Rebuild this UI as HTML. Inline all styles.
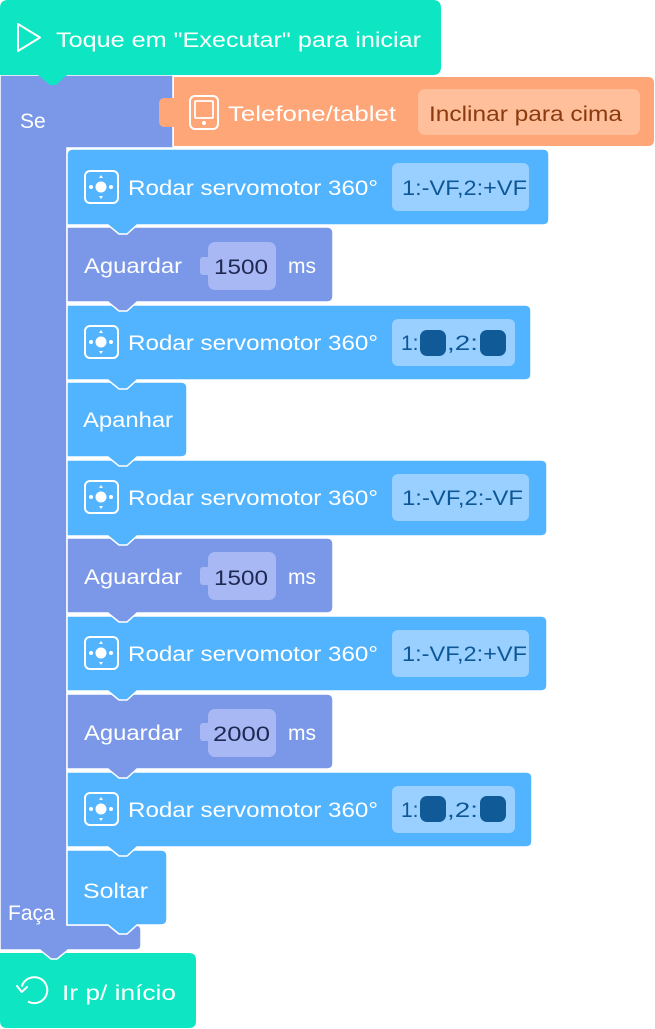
<!DOCTYPE html>
<html><head><meta charset="utf-8"><style>
html,body{margin:0;padding:0;background:#fff;width:655px;height:1029px;overflow:hidden}
svg{display:block}
text{font-family:"Liberation Sans",sans-serif;font-size:21px;fill:#fff}
.f{fill:#0E5796}
.n{fill:#1E2852}
</style></head><body>
<svg width="655" height="1029" viewBox="0 0 655 1029" xmlns="http://www.w3.org/2000/svg">
<defs>
<g id="servo">
<rect x="-16" y="-16" width="33" height="32" rx="5" fill="none" stroke="#fff" stroke-width="2"/>
<circle cx="0" cy="0" r="5.5" fill="#fff"/>
<circle cx="-10" cy="0" r="2" fill="#fff"/><circle cx="10" cy="0" r="2" fill="#fff"/>
<path d="M-2 -9 L0 -12 L2 -9Z M-2 9 L0 12 L2 9Z" fill="#fff"/>
</g>
</defs>
<!-- bottom green -->
<path d="M0 953 H189 Q196 953 196 960 V1021 Q196 1028 189 1028 H7 Q0 1028 0 1021 Z" fill="#0EE6C3"/>
<path d="M21.8 986.5 A13 13 0 1 1 28 1001.5" fill="none" stroke="#fff" stroke-width="2"/>
<path d="M17 986 L21.8 992 L27 987" fill="none" stroke="#fff" stroke-width="2" stroke-linejoin="round" stroke-linecap="round"/>
<text x="62" y="1000" textLength="114" lengthAdjust="spacingAndGlyphs">Ir p/ início</text>
<!-- purple C -->
<path d="M0 75 H173 V148 H67 V925 H136 Q141 925 141 930 V945 Q141 950 136 950 H68 L57 959 H51 L40 950 H0 Z" fill="#7B98E8" stroke="#fff" stroke-width="1.5"/>
<text x="20" y="128">Se</text>
<text x="8" y="920">Faça</text>
<!-- soltar -->
<path d="M67 850 H161 Q167 850 167 856 V919 Q167 925 161 925 H137 L127 934 H119 L108 925 H67 Z" fill="#52B4FF" stroke="#fff" stroke-width="1.5"/>
<text x="83" y="898" textLength="65" lengthAdjust="spacingAndGlyphs">Soltar</text>
<!-- servo5 -->
<path d="M67 772 H526 Q532 772 532 778 V841 Q532 847 526 847 H137 L127 856 H119 L108 847 H67 Z" fill="#52B4FF" stroke="#fff" stroke-width="1.5"/>
<use href="#servo" x="101" y="809"/>
<text x="128" y="817" textLength="250" lengthAdjust="spacingAndGlyphs">Rodar servomotor 360°</text>
<rect x="392" y="786" width="123" height="47" rx="6" fill="#9AD0FF"/>
<text x="401" y="817" class="f">1:</text><rect x="420" y="796" width="26" height="26" rx="7" fill="#0F5A97"/>
<text x="447" y="817" class="f" textLength="31" lengthAdjust="spacingAndGlyphs">,2:</text><rect x="480" y="796" width="26" height="26" rx="7" fill="#0F5A97"/>
<!-- ag3 -->
<path d="M67 694 H327 Q333 694 333 700 V763 Q333 769 327 769 H137 L127 778 H119 L108 769 H67 Z" fill="#7B98E8" stroke="#fff" stroke-width="1.5"/>
<text x="84" y="740" textLength="98" lengthAdjust="spacingAndGlyphs">Aguardar</text>
<rect x="200" y="723" width="14" height="18" rx="3" fill="#A8B8F4"/>
<rect x="208" y="709" width="68" height="48" rx="7" fill="#A8B8F4"/>
<text x="213" y="741" class="n" textLength="57" lengthAdjust="spacingAndGlyphs">2000</text>
<text x="288" y="740">ms</text>
<!-- servo4 -->
<path d="M67 616 H541 Q547 616 547 622 V685 Q547 691 541 691 H137 L127 700 H119 L108 691 H67 Z" fill="#52B4FF" stroke="#fff" stroke-width="1.5"/>
<use href="#servo" x="101" y="653"/>
<text x="128" y="661" textLength="250" lengthAdjust="spacingAndGlyphs">Rodar servomotor 360°</text>
<rect x="392" y="630" width="137" height="47" rx="6" fill="#9AD0FF"/>
<text x="402" y="661" class="f" textLength="125" lengthAdjust="spacingAndGlyphs">1:-VF,2:+VF</text>
<!-- ag2 -->
<path d="M67 538 H327 Q333 538 333 544 V607 Q333 613 327 613 H137 L127 622 H119 L108 613 H67 Z" fill="#7B98E8" stroke="#fff" stroke-width="1.5"/>
<text x="84" y="584" textLength="98" lengthAdjust="spacingAndGlyphs">Aguardar</text>
<rect x="200" y="567" width="14" height="18" rx="3" fill="#A8B8F4"/>
<rect x="208" y="552" width="68" height="48" rx="7" fill="#A8B8F4"/>
<text x="214" y="585" class="n" textLength="54" lengthAdjust="spacingAndGlyphs">1500</text>
<text x="288" y="584">ms</text>
<!-- servo3 -->
<path d="M67 460 H541 Q547 460 547 466 V530 Q547 536 541 536 H137 L127 545 H119 L108 536 H67 Z" fill="#52B4FF" stroke="#fff" stroke-width="1.5"/>
<use href="#servo" x="101" y="497"/>
<text x="128" y="505" textLength="250" lengthAdjust="spacingAndGlyphs">Rodar servomotor 360°</text>
<rect x="392" y="474" width="137" height="47" rx="6" fill="#9AD0FF"/>
<text x="402" y="505" class="f" textLength="121" lengthAdjust="spacingAndGlyphs">1:-VF,2:-VF</text>
<!-- apanhar -->
<path d="M67 382 H181 Q187 382 187 388 V451 Q187 457 181 457 H137 L127 466 H119 L108 457 H67 Z" fill="#52B4FF" stroke="#fff" stroke-width="1.5"/>
<text x="83" y="427" textLength="90" lengthAdjust="spacingAndGlyphs">Apanhar</text>
<!-- servo2 -->
<path d="M67 305 H525 Q531 305 531 311 V374 Q531 380 525 380 H137 L127 389 H119 L108 380 H67 Z" fill="#52B4FF" stroke="#fff" stroke-width="1.5"/>
<use href="#servo" x="101" y="342"/>
<text x="128" y="350" textLength="250" lengthAdjust="spacingAndGlyphs">Rodar servomotor 360°</text>
<rect x="392" y="319" width="123" height="47" rx="6" fill="#9AD0FF"/>
<text x="401" y="350" class="f">1:</text><rect x="420" y="330" width="26" height="26" rx="7" fill="#0F5A97"/>
<text x="447" y="350" class="f" textLength="31" lengthAdjust="spacingAndGlyphs">,2:</text><rect x="480" y="330" width="26" height="26" rx="7" fill="#0F5A97"/>
<!-- ag1 -->
<path d="M67 227 H327 Q333 227 333 233 V296 Q333 302 327 302 H137 L127 311 H119 L108 302 H67 Z" fill="#7B98E8" stroke="#fff" stroke-width="1.5"/>
<text x="84" y="273" textLength="98" lengthAdjust="spacingAndGlyphs">Aguardar</text>
<rect x="200" y="257" width="14" height="18" rx="3" fill="#A8B8F4"/>
<rect x="208" y="242" width="68" height="48" rx="7" fill="#A8B8F4"/>
<text x="214" y="274" class="n" textLength="54" lengthAdjust="spacingAndGlyphs">1500</text>
<text x="288" y="273">ms</text>
<!-- servo1 -->
<path d="M73 149 H543 Q549 149 549 155 V219 Q549 225 543 225 H137 L127 234 H119 L108 225 H67 V155 Q67 149 73 149 Z" fill="#52B4FF" stroke="#fff" stroke-width="1.5"/>
<use href="#servo" x="101" y="187"/>
<text x="128" y="195" textLength="250" lengthAdjust="spacingAndGlyphs">Rodar servomotor 360°</text>
<rect x="392" y="163" width="137" height="48" rx="6" fill="#9AD0FF"/>
<text x="402" y="195" class="f" textLength="125" lengthAdjust="spacingAndGlyphs">1:-VF,2:+VF</text>
<!-- orange -->
<path d="M174 77 H648 Q654 77 654 83 V140 Q654 146 648 146 H174 V127 H165 Q159 127 159 121 V104 Q159 98 165 98 H174 Z" fill="#FFA679"/>
<rect x="190" y="96" width="28" height="33" rx="5" fill="none" stroke="#fff" stroke-width="2"/>
<rect x="195" y="101" width="18" height="17" rx="1" fill="none" stroke="#fff" stroke-width="1.8"/>
<circle cx="204" cy="123" r="2" fill="#fff"/>
<text x="228" y="121" textLength="168" lengthAdjust="spacingAndGlyphs">Telefone/tablet</text>
<rect x="418" y="89" width="222" height="46" rx="7" fill="#FFBF9A"/>
<text x="429" y="121" style="fill:#8A3A0E" textLength="193" lengthAdjust="spacingAndGlyphs">Inclinar para cima</text>
<!-- top green -->
<path d="M0 8 Q0 0 8 0 H433 Q441 0 441 8 V67 Q441 75 433 75 H67 L56 85 H50 L38 75 H0 Z" fill="#0EE6C3"/>
<path d="M18 24 L40 37.5 L18 51 Z" fill="none" stroke="#fff" stroke-width="2" stroke-linejoin="round"/>
<text x="56" y="47" textLength="365" lengthAdjust="spacingAndGlyphs">Toque em "Executar" para iniciar</text>
</svg>
</body></html>
